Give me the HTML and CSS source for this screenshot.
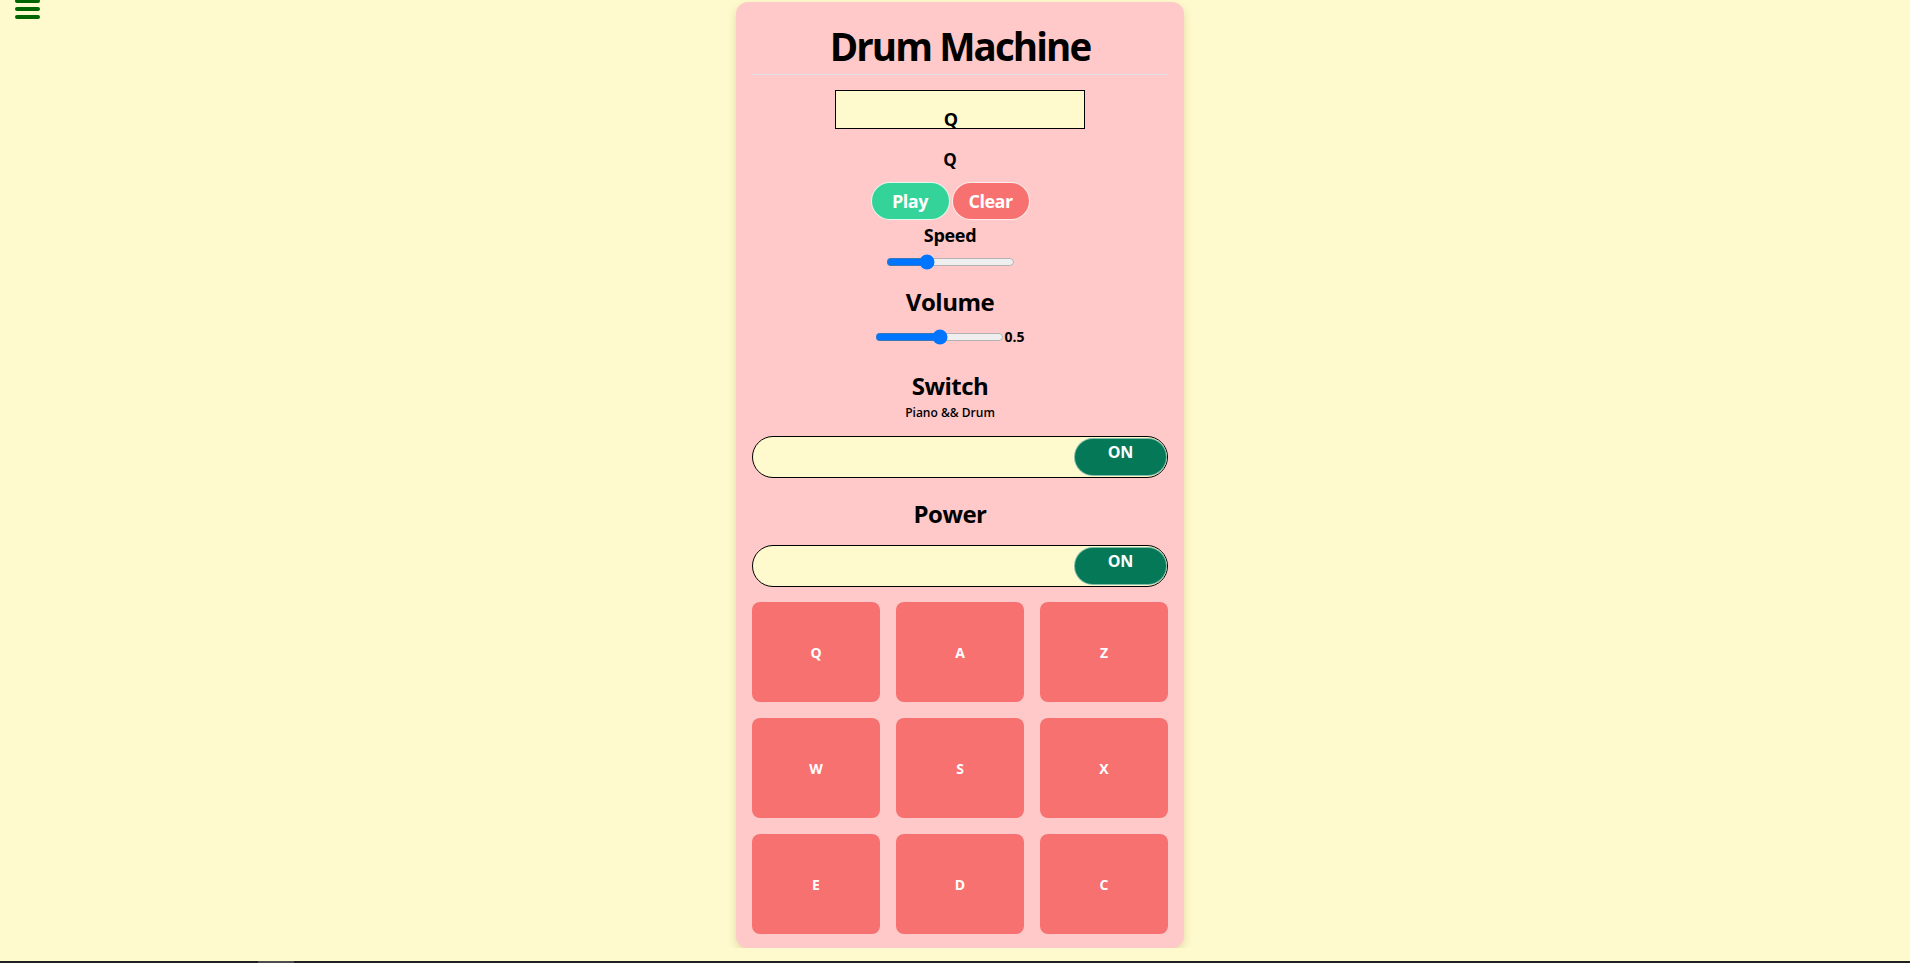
FILE: index.html
```html
<!DOCTYPE html>
<html lang="en">
<head>
<meta charset="utf-8">
<title>Drum Machine</title>
<link rel="stylesheet" href="styles.css">
</head>
<body>
<svg class="menu" width="50" height="24" viewBox="0 0 50 24" aria-label="menu">
  <line x1="17" y1="1" x2="38" y2="1"/>
  <line x1="17" y1="9" x2="38" y2="9"/>
  <line x1="17" y1="17" x2="38" y2="17"/>
</svg>
<div class="page">
  <div class="card">
    <h1 class="title">Drum Machine</h1>
    <div class="display"><span>Q</span></div>
    <div class="group">
      <div class="key-label">Q</div>
      <div class="buttons">
        <button class="btn btn-play">Play</button>
        <button class="btn btn-clear">Clear</button>
      </div>
      <div class="speed-label">Speed</div>
      <input class="slider speed-slider" type="range" min="0" max="1" step="0.1" value="0.3">
      <h2 class="heading heading-volume">Volume</h2>
      <div class="volume-row">
        <input class="slider" type="range" min="0" max="1" step="0.1" value="0.5">
        <span class="volume-value">0.5</span>
      </div>
      <h2 class="heading heading-switch">Switch</h2>
      <div class="sub">Piano &amp;&amp; Drum</div>
    </div>
    <div class="toggle"><div class="knob">ON</div></div>
    <div class="group">
      <h2 class="heading heading-power">Power</h2>
    </div>
    <div class="toggle"><div class="knob">ON</div></div>
    <div class="pads">
      <div class="pad">Q</div>
      <div class="pad">A</div>
      <div class="pad">Z</div>
      <div class="pad">W</div>
      <div class="pad">S</div>
      <div class="pad">X</div>
      <div class="pad">E</div>
      <div class="pad">D</div>
      <div class="pad">C</div>
    </div>
  </div>
</div>
<div class="hbar"><div class="hthumb"></div></div>
</body>
</html>
```
FILE: styles.css
```css
html, body {
  margin: 0;
  padding: 0;
  overflow: hidden;
  background: #fffacd;
  font-family: "Open Sans", "Noto Sans", sans-serif;
  color: #000;
}

.menu {
  position: absolute;
  left: 0;
  top: 0;
}
.menu line {
  stroke: #006400;
  stroke-width: 4;
  stroke-linecap: round;
}

.page {
  width: 1920px;
  display: flex;
  justify-content: center;
  padding-top: 2px;
}

.card {
  width: 448px;
  box-sizing: border-box;
  background: #ffc9c9;
  border-radius: 12px;
  padding: 16px 16px 14px;
  box-shadow: 0 4px 10px rgba(120, 100, 40, 0.22);
  display: flex;
  flex-direction: column;
}

.title {
  margin: 0;
  padding: 4px 0 4px;
  font-size: 38.5px;
  line-height: 48px;
  font-weight: 700;
  text-align: center;
  letter-spacing: -1.9px;
  border-bottom: 1px solid #e3dfe6;
}

.display {
  align-self: center;
  width: 250px;
  height: 39px;
  box-sizing: border-box;
  margin-top: 15px;
  border: 1px solid #000;
  background: #fffacd;
  padding: 18px 18px 0 0;
  text-align: center;
  font-size: 18px;
  line-height: 20px;
  font-weight: 700;
}

.group {
  padding-right: 20px;
  display: flex;
  flex-direction: column;
  align-items: center;
  text-align: center;
}

.key-label {
  margin-top: 20px;
  font-size: 17px;
  line-height: 22px;
  font-weight: 700;
}

.buttons {
  margin-top: 11px;
  display: flex;
  gap: 2px;
}

.btn {
  height: 38px;
  box-sizing: border-box;
  padding: 0;
  border: 1px solid rgba(255, 255, 255, 0.85);
  border-radius: 19px;
  color: #fff;
  font-family: "Open Sans", "Noto Sans", sans-serif;
  font-size: 18px;
  font-weight: 700;
  letter-spacing: -0.5px;
}
.btn-play { background: #34d399; width: 79px; }
.btn-clear { background: #f87171; width: 78px; }

.speed-label {
  margin-top: 3px;
  font-size: 18px;
  line-height: 24px;
  font-weight: 700;
  letter-spacing: -0.3px;
}

.slider {
  display: block;
  width: 129px;
  height: 16px;
  margin: 0;
}
.speed-slider {
  margin-top: 7px;
}

.heading {
  margin: 0;
  font-size: 24px;
  line-height: 32px;
  font-weight: 700;
  letter-spacing: -0.5px;
}
.heading-volume { margin-top: 16px; }
.heading-switch { margin-top: 25px; }
.heading-power { margin-top: 20px; }

.volume-row {
  margin-top: 11px;
  display: flex;
  align-items: center;
  height: 16px;
}
.volume-value {
  font-size: 14px;
  line-height: 16px;
  font-weight: 700;
}

.sub {
  margin-top: 3px;
  font-size: 12px;
  line-height: 16px;
  font-weight: 600;
}

.toggle {
  margin-top: 15px;
  height: 42px;
  box-sizing: border-box;
  border: 1px solid #000;
  border-radius: 21px;
  background: #fffacd;
  display: flex;
  justify-content: flex-end;
  padding-top: 1px;
}

.knob {
  width: 93px;
  height: 38px;
  box-sizing: border-box;
  border-radius: 19px;
  background: #047857;
  border: 1px solid rgba(255, 255, 255, 0.5);
  color: #fff;
  text-align: center;
  font-size: 16px;
  line-height: 20px;
  font-weight: 700;
  padding-top: 3px;
}

.pads {
  margin-top: 15px;
  display: grid;
  grid-template-columns: repeat(3, 1fr);
  grid-auto-rows: 100px;
  gap: 16px;
}

.pad {
  background: #f87171;
  border-radius: 8px;
  color: #fff;
  font-size: 14px;
  font-weight: 700;
  display: flex;
  align-items: center;
  justify-content: center;
}

.hbar {
  position: fixed;
  left: 0;
  right: 0;
  bottom: 0;
  height: 2px;
  background: #202020;
}
.hthumb {
  position: absolute;
  left: 258px;
  top: 0;
  width: 36px;
  height: 2px;
  background: #4d4d4d;
}
```
